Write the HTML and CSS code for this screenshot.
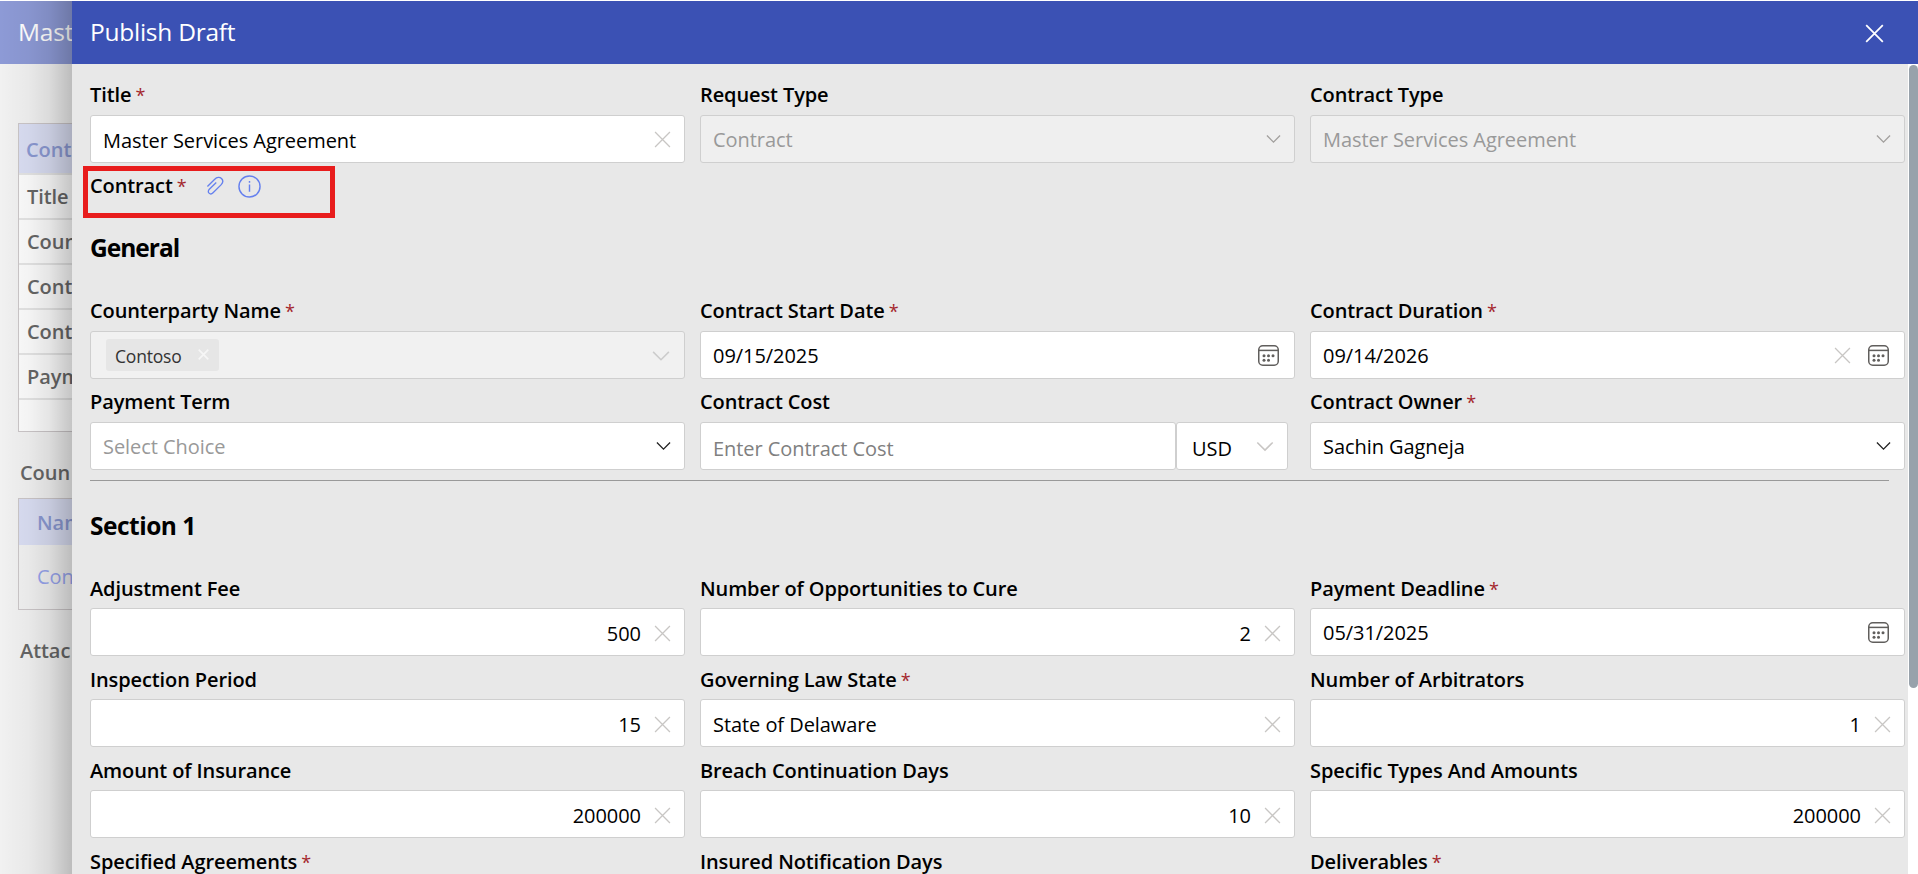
FILE: index.html
```html
<!DOCTYPE html>
<html lang="en">
<head>
<meta charset="utf-8">
<title>Publish Draft</title>
<link rel="stylesheet" href="styles.css">
</head>
<body>
<svg class="defs" width="0" height="0">
  <symbol id="x" viewBox="0 0 16 16"><path d="M1 1L15 15M15 1L1 15"/></symbol>
  <symbol id="chev" viewBox="0 0 16 10"><path d="M1 1.3L8 8.3L15 1.3"/></symbol>
  <symbol id="cal" viewBox="0 0 21 21"><rect x=".75" y=".75" width="19.5" height="19.5" rx="4"/><path d="M1 5.4H20"/><g class="dots"><circle cx="6" cy="10.8" r="1.5"/><circle cx="10.5" cy="10.8" r="1.5"/><circle cx="15" cy="10.8" r="1.5"/><circle cx="6" cy="15.2" r="1.5"/><circle cx="10.5" cy="15.2" r="1.5"/></g></symbol>
</svg>
<div class="screen">
  <aside class="under">
    <div class="under-head">Mast</div>
    <div class="under-table">
      <div class="th">Cont</div>
      <div class="tr">Title</div>
      <div class="tr">Coun</div>
      <div class="tr">Cont</div>
      <div class="tr">Cont</div>
      <div class="tr">Paym</div>
      <div class="tr last"></div>
    </div>
    <div class="cap">Coun</div>
    <div class="names">
      <div class="nh">Nam</div>
      <div class="nr">Con</div>
    </div>
    <div class="cap attach">Attac</div>
  </aside>
  <main class="panel">
    <header class="head"><h1>Publish Draft</h1><svg class="close"><use href="#x"/></svg></header>
    <div class="body">
      <div class="form">
        <div class="grid">
          <div class="field"><label>Title <i>*</i></label><div class="input title"><span class="v">Master Services Agreement</span><svg class="x"><use href="#x"/></svg></div></div>
          <div class="field"><label>Request Type</label><div class="input off"><span class="v">Contract</span><svg class="chev"><use href="#chev"/></svg></div></div>
          <div class="field"><label>Contract Type</label><div class="input off"><span class="v">Master Services Agreement</span><svg class="chev"><use href="#chev"/></svg></div></div>
        </div>
        <div class="contract">
          <label>Contract <i>*</i></label>
          <svg class="clip" viewBox="0 0 20 20"><path d="M1.500 10.600L9.200 2.900C11.400 .700 14.400 .300 16.300 2.200C18.200 4.100 17.900 6.700 15.800 8.800L7.400 17.200C6.100 18.500 4.300 18.600 3.200 17.500C2.100 16.400 2.200 14.700 3.500 13.400L10.800 6.300"/></svg>
          <svg class="info" viewBox="0 0 24 24"><circle cx="12" cy="12" r="11"/><path d="M12 10V17.500M12 6.300V8"/></svg>
          <div class="mark"></div>
        </div>
        <h2>General</h2>
        <div class="grid">
          <div class="field"><label>Counterparty Name <i>*</i></label><div class="input off people"><span class="chip">Contoso<svg><use href="#x"/></svg></span><svg class="chev"><use href="#chev"/></svg></div></div>
          <div class="field"><label>Contract Start Date <i>*</i></label><div class="input"><span class="v">09/15/2025</span><svg class="cal"><use href="#cal"/></svg></div></div>
          <div class="field"><label>Contract Duration <i>*</i></label><div class="input"><span class="v">09/14/2026</span><svg class="x"><use href="#x"/></svg><svg class="cal"><use href="#cal"/></svg></div></div>
          <div class="field"><label>Payment Term</label><div class="input choice"><span class="v">Select Choice</span><svg class="chev"><use href="#chev"/></svg></div></div>
          <div class="field"><label>Contract Cost</label><div class="cost"><div class="input amount"><span class="v">Enter Contract Cost</span></div><div class="input usd"><span class="v">USD</span><svg class="chev"><use href="#chev"/></svg></div></div></div>
          <div class="field"><label>Contract Owner <i>*</i></label><div class="input"><span class="v">Sachin Gagneja</span><svg class="chev"><use href="#chev"/></svg></div></div>
        </div>
        <hr>
        <h2 class="second">Section 1</h2>
        <div class="grid lower">
          <div class="field"><label>Adjustment Fee</label><div class="input num"><span class="v">500</span><svg class="x"><use href="#x"/></svg></div></div>
          <div class="field"><label>Number of Opportunities to Cure</label><div class="input num"><span class="v">2</span><svg class="x"><use href="#x"/></svg></div></div>
          <div class="field"><label>Payment Deadline <i>*</i></label><div class="input date"><span class="v">05/31/2025</span><svg class="cal"><use href="#cal"/></svg></div></div>
          <div class="field"><label>Inspection Period</label><div class="input num"><span class="v">15</span><svg class="x"><use href="#x"/></svg></div></div>
          <div class="field"><label>Governing Law State <i>*</i></label><div class="input"><span class="v">State of Delaware</span><svg class="x"><use href="#x"/></svg></div></div>
          <div class="field"><label>Number of Arbitrators</label><div class="input num"><span class="v">1</span><svg class="x"><use href="#x"/></svg></div></div>
          <div class="field"><label>Amount of Insurance</label><div class="input num"><span class="v">200000</span><svg class="x"><use href="#x"/></svg></div></div>
          <div class="field"><label>Breach Continuation Days</label><div class="input num"><span class="v">10</span><svg class="x"><use href="#x"/></svg></div></div>
          <div class="field"><label>Specific Types And Amounts</label><div class="input num"><span class="v">200000</span><svg class="x"><use href="#x"/></svg></div></div>
          <div class="field"><label>Specified Agreements <i>*</i></label></div>
          <div class="field"><label>Insured Notification Days</label></div>
          <div class="field"><label>Deliverables <i>*</i></label></div>
        </div>
      </div>
      <div class="track"><div class="thumb"></div></div>
    </div>
  </main>
</div>
</body>
</html>
```
FILE: styles.css
```css
* { box-sizing: border-box; }
body { margin: 0; background: #fff; overflow: hidden; font-family: "Open Sans", "Noto Sans", sans-serif; font-size: 20px; letter-spacing: -0.06px; color: #000; }
svg { fill: none; stroke: currentColor; flex: none; }
.defs { position: absolute; }
.screen { display: flex; height: 874px; padding-top: 1px; overflow: hidden; }

/* page behind the panel */
.under { position: relative; width: 72px; flex: none; overflow: hidden; background: #f1f1f1; color: #666; font-weight: 600; }
.under::after { content: ""; position: absolute; inset: 0; background: linear-gradient(90deg, rgba(0,0,0,0) 0, rgba(0,0,0,.035) 40%, rgba(0,0,0,.09) 68%, rgba(0,0,0,.22) 100%); }
.under-head { height: 63px; padding-left: 18px; background: #8d9ad6; color: #fff; font-size: 24.500px; font-weight: 400; line-height: 61px; letter-spacing: -0.2px; }
.under-table { width: 200px; margin: 59px 0 0 18px; border: 1px solid #cbc6c8; background: #fcfcfc; }
.th { height: 49px; padding-left: 7px; background: #dadef3; color: #8b99d2; line-height: 51px; }
.tr { height: 45px; padding-left: 8px; border-top: 2px solid #e4e4e4; line-height: 44px; }
.tr.last { height: 33px; }
.cap { margin: 28px 0 0 20px; height: 37px; line-height: 25px; }
.names { width: 200px; height: 112px; margin: 1px 0 0 18px; border: 1px solid #cbc6c8; }
.nh { height: 46px; padding-left: 18px; background: #dadef3; color: #8b99d2; line-height: 48px; }
.nr { padding-left: 18px; color: #98a5ee; line-height: 64px; font-weight: 400; }
.cap.attach { margin-top: 28px; }

/* panel */
.panel { flex: 1; min-width: 0; display: flex; flex-direction: column; background: #e8e8e8; }
.head { height: 63px; flex: none; display: flex; align-items: center; justify-content: space-between; padding: 0 34px 0 18px; background: #3b51b4; color: #fff; }
h1 { margin: 0; font-size: 24.500px; font-weight: 400; letter-spacing: -0.25px; line-height: 61px; padding-bottom: 2px; }
.close { width: 19px; height: 19px; stroke-width: 1.5; margin-top: 2px; }
.body { flex: 1; display: flex; min-height: 0; overflow: hidden; }
.form { flex: 1; padding: 8px 3px 0 18px; }
.grid { display: grid; grid-template-columns: repeat(3, 595px); column-gap: 15px; }
.field { height: 91px; }
label { display: block; height: 43px; padding-top: 9px; line-height: 27px; font-weight: 600; letter-spacing: -0.11px; white-space: nowrap; }
label i { font-style: normal; font-size: 18px; font-weight: 400; color: #a4262c; margin-left: -1px; }
.input { height: 48px; display: flex; align-items: center; border: 1px solid #cfcfcf; border-radius: 3px; background: #fff; padding: 0 13px 0 12px; }
.v { flex: 1; padding-top: 1px; white-space: nowrap; }
.title .v { padding-top: 2px; }
.x { width: 17px; height: 17px; color: #c8c6c4; stroke-width: 1.2; }
.chev { width: 15px; height: 10px; color: #222; stroke-width: 1.4; }
.cal { width: 21px; height: 21px; margin-right: 2px; color: #605e5c; stroke-width: 1.5; }
.x + .cal { margin-left: 17px; }
.dots { fill: #605e5c; stroke: none; }
.off { background: #efefef; color: #999; }
.off .chev { color: #a19f9d; margin-bottom: 1px; }
.num .v { text-align: right; padding-right: 13px; }
.choice .v { color: #999; }
.people { justify-content: space-between; padding: 0 14px 0 15px; background: #f1f1f1; }
.people .chev { width: 18px; height: 12px; color: #ccc; margin: 2px 0 0; }
.chip { display: flex; align-items: center; width: 113px; height: 32px; padding: 1px 10px 0 9px; border-radius: 3px; background: #e6e6e6; color: #333; font-size: 17.500px; justify-content: space-between; letter-spacing: -0.2px; }
.chip svg { width: 11px; height: 11px; color: #f6f6f6; stroke-width: 2.5; margin-bottom: 2px; }
.cost { display: flex; }
.amount { width: 476px; }
.amount .v { color: #808080; padding-top: 4px; }
.usd { width: 112px; padding: 0 13px 0 15px; }
.usd .v { padding-top: 4px; }
.usd .chev { width: 18px; height: 11px; color: #c8c6c4; margin: 1px 0 0; }

/* contract attachment row */
.contract { position: relative; height: 57px; display: flex; align-items: flex-start; color: #6580ee; }
.contract label { color: #000; }
.clip { width: 19px; height: 20px; margin: 13px 0 0 19px; stroke-width: 1.4; }
.info { width: 23px; height: 23px; margin: 12px 0 0 13px; stroke-width: 1.5; }
.mark { position: absolute; left: -7px; top: 3px; width: 252px; height: 52px; border: 5px solid #e81c1c; }
h2 { margin: 0; height: 68px; padding-top: 10px; line-height: 36px; font-size: 24.500px; font-weight: 700; letter-spacing: -1px; }
hr { width: 1799px; height: 1px; margin: 10px 0 0; border: 0; background: #999; }
h2.second { height: 84px; padding-top: 27px; letter-spacing: -0.5px; }
.lower label { padding-top: 10px; }
.lower .v { padding-top: 3px; }
.lower .date .v { padding-top: 1px; }
.lower .x { margin-top: 2px; }

.track { width: 10px; background: #fff; padding: 1px 0 0 1px; }
.thumb { height: 623px; border-radius: 5px; background: #98a2ab; }
```
